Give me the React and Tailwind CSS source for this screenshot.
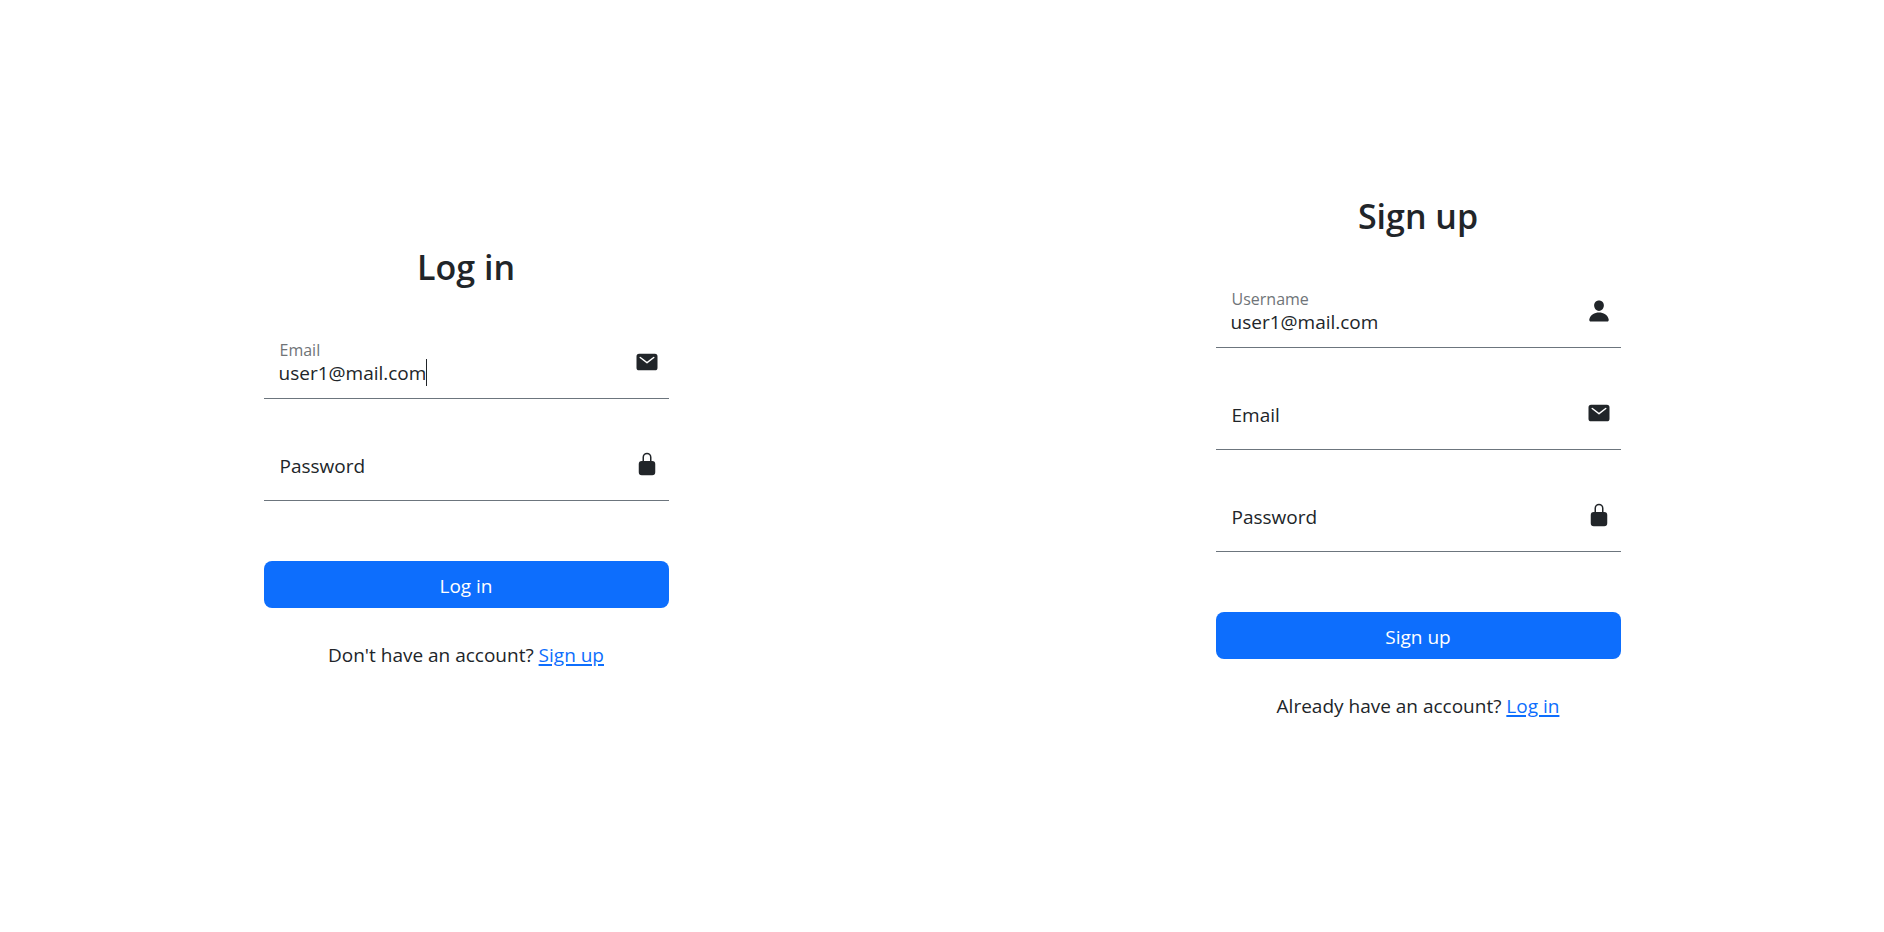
import { IoLockClosed, IoMail, IoPerson } from "react-icons/io5";

function Field({ id, label, type = "text", value = "", icon: Icon, active = false }) {
  return (
    <div className="relative flex h-[71px] items-center border-b border-[#6c757d]">
      <input
        id={id}
        type={type}
        defaultValue={value}
        placeholder=" "
        className="peer h-full min-w-0 flex-1 bg-transparent pt-6 pb-1 pl-[15px] text-[19px] leading-7 outline-none"
      />
      <label
        htmlFor={id}
        className="pointer-events-none absolute top-2.5 left-4 text-base leading-6 text-[#6f7478] peer-placeholder-shown:top-[22px] peer-placeholder-shown:text-[19px] peer-placeholder-shown:leading-7 peer-placeholder-shown:text-[#212529]"
      >
        {label}
      </label>
      {active && (
        <div aria-hidden="true" className="pointer-events-none absolute bottom-3 left-[15px] flex h-[27px] text-[19px]">
          <span className="invisible">{value}</span>
          <span className="w-px bg-[#212529]" />
        </div>
      )}
      <Icon aria-hidden="true" className="mr-2.5 mb-[3px] size-6 shrink-0" />
    </div>
  );
}

function AuthForm({ title, fields, prompt, linkText }) {
  return (
    <section className="flex flex-1 items-center justify-center px-4">
      <form className="w-full max-w-[405px]" onSubmit={(e) => e.preventDefault()}>
        <h2 className="text-center text-[34px] leading-[42px] font-semibold">{title}</h2>
        <div className="mt-10 flex flex-col gap-[31px]">
          {fields.map((field) => (
            <Field key={field.id} {...field} />
          ))}
        </div>
        <button type="submit" className="mt-[60px] h-[47px] w-full rounded-lg bg-[#0d6efd] pt-[3px] text-[19px] text-white">
          {title}
        </button>
        <p className="mt-8 text-center text-[19px] leading-[30px]">
          {prompt}{" "}
          <a href="#" className="text-[#0d6efd] underline decoration-2 underline-offset-2">
            {linkText}
          </a>
        </p>
      </form>
    </section>
  );
}

const loginFields = [
  { id: "login-email", label: "Email", value: "user1@mail.com", icon: IoMail, active: true },
  { id: "login-password", label: "Password", type: "password", icon: IoLockClosed },
];

const signupFields = [
  { id: "signup-username", label: "Username", value: "user1@mail.com", icon: IoPerson },
  { id: "signup-email", label: "Email", type: "email", icon: IoMail },
  { id: "signup-password", label: "Password", type: "password", icon: IoLockClosed },
];

export default function App() {
  return (
    <main className="flex min-h-screen gap-5 bg-white pb-4 font-['Open_Sans','Noto_Sans',sans-serif] text-[#212529]">
      <AuthForm title="Log in" fields={loginFields} prompt="Don't have an account?" linkText="Sign up" />
      <AuthForm title="Sign up" fields={signupFields} prompt="Already have an account?" linkText="Log in" />
    </main>
  );
}
